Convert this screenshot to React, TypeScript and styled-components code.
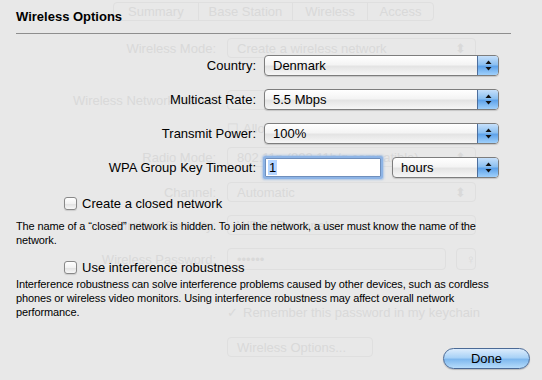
import React from "react";
import styled, { createGlobalStyle } from "styled-components";

const GlobalStyle = createGlobalStyle`
  html, body {
    margin: 0;
    padding: 0;
  }
  body {
    background: #e8e8e8;
    font-family: "Liberation Sans", Arial, sans-serif;
  }
`;

const Stage = styled.div`
  position: relative;
  width: 542px;
  height: 380px;
  overflow: hidden;
  background: #e8e8e8;
`;

/* ---- faded window behind the sheet ---- */

const Back = styled.div`
  display: flex;
  flex-direction: column;
  padding-top: 2px;
  color: #d9d9d9;
  font-size: 13px;
  white-space: nowrap;
`;

const Tabs = styled.div`
  display: flex;
  margin-left: 113px;
  width: 321px;
  height: 19px;
  border: 1px solid #dfdfdf;
  border-radius: 4px;
  box-sizing: border-box;
`;

const Tab = styled.div<{ $w: number }>`
  width: ${(p) => p.$w}px;
  display: flex;
  align-items: center;
  justify-content: center;
  border-left: 1px solid #dfdfdf;
  &:first-child {
    border-left: 0;
  }
`;

const GhostRow = styled.div<{ $mt: number; $h?: number }>`
  display: grid;
  grid-template-columns: 200px 249px;
  column-gap: 11px;
  padding-left: 16px;
  margin-top: ${(p) => p.$mt}px;
  height: ${(p) => p.$h ?? 20}px;
  align-items: center;
`;

const GhostLabel = styled.div`
  text-align: right;
`;

const GhostBox = styled.div<{ $w?: number }>`
  width: ${(p) => (p.$w ? `${p.$w}px` : "auto")};
  height: 100%;
  box-sizing: border-box;
  border: 1px solid #dfdfdf;
  border-radius: 4px;
  padding: 0 9px;
  display: flex;
  align-items: center;
  justify-content: space-between;
`;

const GhostPair = styled.div`
  display: flex;
  gap: 10px;
  height: 100%;
`;

const GhostCheck = styled.div`
  display: flex;
  align-items: center;
  gap: 6px;
`;

const GhostTick = styled.span`
  width: 10px;
  text-align: center;
`;

/* ---- the sheet ---- */

const Sheet = styled.div`
  position: absolute;
  inset: 0;
  display: flex;
  flex-direction: column;
  padding: 9px 12px 11px 16px;
  color: #000;
`;

const Title = styled.div`
  font-size: 13px;
  font-weight: bold;
  line-height: 16px;
`;

const Separator = styled.div`
  width: 495px;
  height: 1px;
  margin-top: 8px;
  background: #8e8e8e;
`;

const Form = styled.div`
  display: grid;
  grid-template-columns: 240px 235px;
  column-gap: 8px;
  row-gap: 13px;
  margin-top: 21px;
  font-size: 13px;
`;

const Label = styled.div`
  text-align: right;
  align-self: center;
`;

const Popup = styled.div<{ $w?: number }>`
  width: ${(p) => (p.$w ? `${p.$w}px` : "auto")};
  height: 21px;
  box-sizing: border-box;
  border: 1px solid #7d7d7d;
  border-radius: 4px;
  background: linear-gradient(#ffffff 0%, #f4f4f4 45%, #e4e4e4 55%, #f6f6f6 100%);
  box-shadow: 0 1px 1px rgba(0, 0, 0, 0.15);
  display: flex;
  align-items: center;
  overflow: hidden;
`;

const PopupText = styled.span`
  flex: 1;
  padding-left: 8px;
`;

const PopupArrows = styled.div`
  width: 20px;
  align-self: stretch;
  border-left: 1px solid #4d6e9c;
  background: linear-gradient(#c6e0fb 0%, #8cc0f1 45%, #5fa3ea 55%, #9fd0fb 100%);
  display: flex;
  align-items: center;
  justify-content: center;
`;

const Pair = styled.div`
  display: flex;
  align-items: center;
  gap: 11px;
`;

const TextField = styled.div`
  width: 116px;
  height: 19px;
  margin-left: 1px;
  box-sizing: border-box;
  border: 1px solid #6f8fbc;
  background: #fff;
  box-shadow: 0 0 0 2px #8db4e6, 0 0 2px 3px rgba(120, 165, 225, 0.5);
  border-radius: 1px;
  display: flex;
  align-items: center;
  padding-left: 2px;
`;

const Selected = styled.span`
  background: #b5d5ff;
  padding: 0 1px;
  line-height: 15px;
`;

const CheckRow = styled.label<{ $mt: number }>`
  display: flex;
  align-items: center;
  gap: 5px;
  height: 16px;
  margin-top: ${(p) => p.$mt}px;
  padding-left: 48px;
  font-size: 13px;
`;

const CheckBox = styled.span`
  width: 13px;
  height: 13px;
  box-sizing: border-box;
  border: 1px solid #888;
  border-radius: 3px;
  background: linear-gradient(#ffffff 0%, #f2f2f2 50%, #e2e2e2 55%, #f8f8f8 100%);
  box-shadow: 0 1px 1px rgba(0, 0, 0, 0.12);
`;

const Note = styled.p<{ $mt: number }>`
  margin: ${(p) => p.$mt}px 0 0;
  max-width: 494px;
  font-size: 11px;
  line-height: 14px;
  letter-spacing: -0.12px;
`;

const Footer = styled.div`
  margin-top: auto;
  display: flex;
  justify-content: flex-end;
`;

const DoneButton = styled.button`
  width: 87px;
  height: 21px;
  border: 1px solid #4b6a96;
  border-radius: 11px;
  background: linear-gradient(#dcecfc 0%, #a9d2f7 45%, #7fb8ee 55%, #b6dcfb 100%);
  box-shadow: 0 1px 1px rgba(0, 0, 0, 0.2);
  font-family: "Liberation Sans", Arial, sans-serif;
  font-size: 13px;
  color: #000;
  padding: 0;
`;

function Arrows() {
  return (
    <svg width="7" height="11" viewBox="0 0 7 11">
      <path d="M3.5 0.5 L6.5 4 L0.5 4 Z" fill="#111" />
      <path d="M3.5 10.5 L6.5 7 L0.5 7 Z" fill="#111" />
    </svg>
  );
}

function Select({ value, width }: { value: string; width?: number }) {
  return (
    <Popup $w={width}>
      <PopupText>{value}</PopupText>
      <PopupArrows>
        <Arrows />
      </PopupArrows>
    </Popup>
  );
}

function BackWindow() {
  return (
    <Back aria-hidden="true">
      <Tabs>
        <Tab $w={85}>Summary</Tab>
        <Tab $w={95}>Base Station</Tab>
        <Tab $w={75}>Wireless</Tab>
        <Tab $w={66}>Access</Tab>
      </Tabs>
      <GhostRow $mt={17}>
        <GhostLabel>Wireless Mode:</GhostLabel>
        <GhostBox>Create a wireless network<span>⬍</span></GhostBox>
      </GhostRow>
      <GhostRow $mt={32}>
        <GhostLabel>Wireless Network Name:</GhostLabel>
        <GhostBox />
      </GhostRow>
      <GhostRow $mt={11} $h={14}>
        <span />
        <GhostCheck>
          <GhostTick>☐</GhostTick>Allow this network to be extended
        </GhostCheck>
      </GhostRow>
      <GhostRow $mt={12}>
        <GhostLabel>Radio Mode:</GhostLabel>
        <GhostBox>802.11n (802.11b/g compatible)<span>⬍</span></GhostBox>
      </GhostRow>
      <GhostRow $mt={15}>
        <GhostLabel>Channel:</GhostLabel>
        <GhostBox>Automatic<span>⬍</span></GhostBox>
      </GhostRow>
      <GhostRow $mt={13}>
        <GhostLabel>Wireless Security:</GhostLabel>
        <GhostBox>WPA2 Personal<span>⬍</span></GhostBox>
      </GhostRow>
      <GhostRow $mt={13} $h={22}>
        <GhostLabel>Wireless Password:</GhostLabel>
        <GhostPair>
          <GhostBox $w={220}>••••••</GhostBox>
          <GhostBox $w={19}>♀</GhostBox>
        </GhostPair>
      </GhostRow>
      <GhostRow $mt={35} $h={14}>
        <span />
        <GhostCheck>
          <GhostTick>✓</GhostTick>Remember this password in my keychain
        </GhostCheck>
      </GhostRow>
      <GhostRow $mt={18}>
        <span />
        <GhostBox $w={146}>Wireless Options...</GhostBox>
      </GhostRow>
    </Back>
  );
}

export default function App() {
  return (
    <Stage>
      <GlobalStyle />
      <BackWindow />
      <Sheet>
        <Title>Wireless Options</Title>
        <Separator />
        <Form>
          <Label>Country:</Label>
          <Select value="Denmark" />
          <Label>Multicast Rate:</Label>
          <Select value="5.5 Mbps" />
          <Label>Transmit Power:</Label>
          <Select value="100%" />
          <Label>WPA Group Key Timeout:</Label>
          <Pair>
            <TextField>
              <Selected>1</Selected>
            </TextField>
            <Select value="hours" width={107} />
          </Pair>
        </Form>
        <CheckRow $mt={17}>
          <CheckBox />
          Create a closed network
        </CheckRow>
        <Note $mt={8}>
          The name of a “closed” network is hidden. To join the network, a user must know the name of the
          network.
        </Note>
        <CheckRow $mt={12}>
          <CheckBox />
          Use interference robustness
        </CheckRow>
        <Note $mt={2}>
          Interference robustness can solve interference problems caused by other devices, such as cordless
          phones or wireless video monitors. Using interference robustness may affect overall network
          performance.
        </Note>
        <Footer>
          <DoneButton>Done</DoneButton>
        </Footer>
      </Sheet>
    </Stage>
  );
}
